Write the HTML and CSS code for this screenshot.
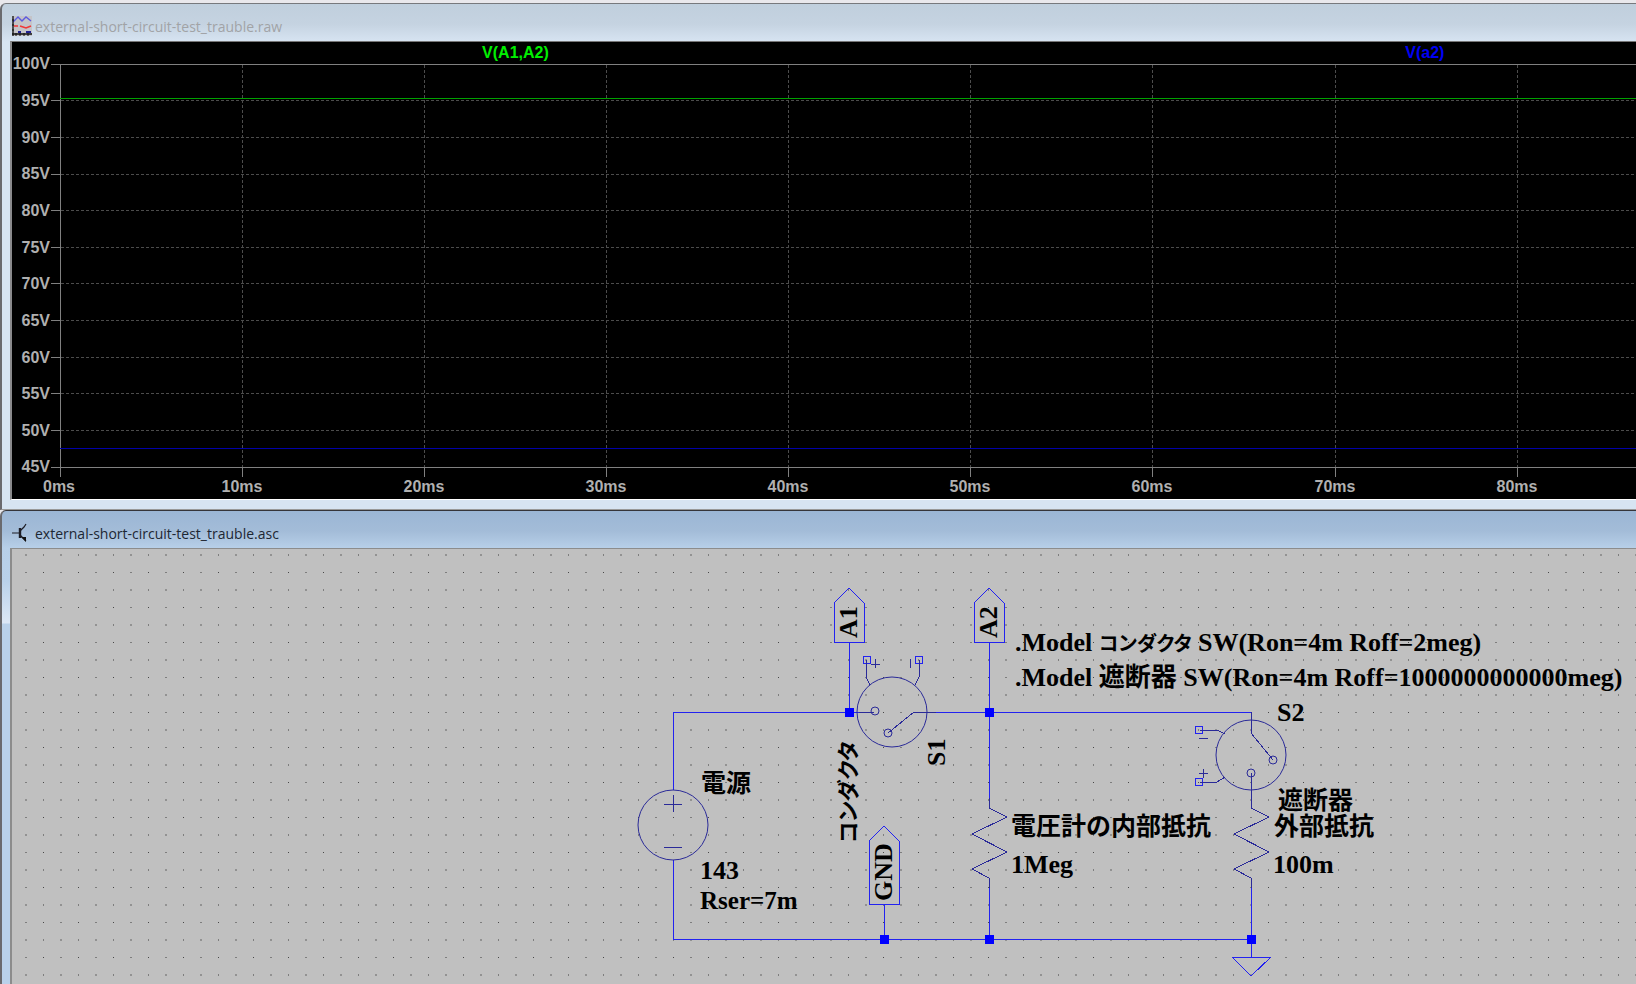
FILE: index.html
```html
<!DOCTYPE html>
<html lang="ja">
<head>
<meta charset="utf-8">
<title>external-short-circuit-test_trauble</title>
<link rel="stylesheet" href="styles.css">
</head>
<body>
<main class="workspace">
  <section class="window window-plot">
    <header class="titlebar">
      <svg class="icon" width="20" height="20" aria-hidden="true">
        <rect width="20" height="20" fill="#c4c4c8"/>
        <path d="M1 6L6 1L10 5L14 1L19 5" fill="none" stroke="#5a5ae0" stroke-width="1.4"/>
        <path d="M2 10H6M8 10L14 12L19 10" fill="none" stroke="#f03838" stroke-width="1.6"/>
        <path d="M6 16H9M14 16H19" stroke="#202090" stroke-width="2"/>
        <path d="M1 0V20M0 18H20" stroke="#111" stroke-width="1.3"/>
        <path d="M4 17V20M8 17V20M12 17V20M16 17V20M0 4H2M0 9H2M0 14H2" stroke="#111"/>
      </svg>
      <h1 class="title title-inactive">external-short-circuit-test_trauble.raw</h1>
    </header>
    <svg class="plot" role="img" aria-label="V(A1,A2), V(a2)">
      <g class="trace-names">
        <text class="name-a" x="31%" y="16">V(A1,A2)</text>
        <text class="name-b" x="87%" y="16">V(a2)</text>
      </g>
      <g class="volts">
        <text x="38" y="27">100V</text>
        <text x="38" y="64">95V</text>
        <text x="38" y="101">90V</text>
        <text x="38" y="137">85V</text>
        <text x="38" y="174">80V</text>
        <text x="38" y="211">75V</text>
        <text x="38" y="247">70V</text>
        <text x="38" y="284">65V</text>
        <text x="38" y="321">60V</text>
        <text x="38" y="357">55V</text>
        <text x="38" y="394">50V</text>
        <text x="38" y="430">45V</text>
      </g>
      <g class="times">
        <text x="47" y="450">0ms</text>
        <text x="230" y="450">10ms</text>
        <text x="412" y="450">20ms</text>
        <text x="594" y="450">30ms</text>
        <text x="776" y="450">40ms</text>
        <text x="958" y="450">50ms</text>
        <text x="1140" y="450">60ms</text>
        <text x="1323" y="450">70ms</text>
        <text x="1505" y="450">80ms</text>
      </g>
      <g class="grid">
        <path d="M230 23V425M412 23V425M594 23V425M776 23V425M958 23V425M1140 23V425M1323 23V425M1505 23V425"/>
        <line x1="49" y1="58" x2="100%" y2="58"/>
        <line x1="49" y1="95" x2="100%" y2="95"/>
        <line x1="49" y1="132" x2="100%" y2="132"/>
        <line x1="49" y1="168" x2="100%" y2="168"/>
        <line x1="49" y1="205" x2="100%" y2="205"/>
        <line x1="49" y1="241" x2="100%" y2="241"/>
        <line x1="49" y1="278" x2="100%" y2="278"/>
        <line x1="49" y1="315" x2="100%" y2="315"/>
        <line x1="49" y1="351" x2="100%" y2="351"/>
        <line x1="49" y1="388" x2="100%" y2="388"/>
      </g>
      <g class="axis">
        <line x1="39" y1="22" x2="100%" y2="22"/>
        <line x1="39" y1="425" x2="100%" y2="425"/>
        <path d="M48 22V435M230 425V435M412 425V435M594 425V435M776 425V435M958 425V435M1140 425V435M1323 425V435M1505 425V435"/>
        <path d="M39 58H48M39 95H48M39 132H48M39 168H48M39 205H48M39 241H48M39 278H48M39 315H48M39 351H48M39 388H48"/>
      </g>
      <line class="trace-a" x1="48" y1="56" x2="100%" y2="56"/>
      <line class="trace-b" x1="48" y1="406" x2="100%" y2="406"/>
    </svg>
  </section>

  <section class="window window-schematic">
    <header class="titlebar">
      <svg class="icon" width="20" height="20" aria-hidden="true">
        <path d="M0 10H7M8 8L12 4L14 1M8 12L14 18" fill="none" stroke="#1c1c24" stroke-width="1.2"/>
        <path d="M8 5V15" stroke="#1c1c24" stroke-width="2.4"/>
        <path d="M9 14L14 14L14 19Z" fill="#111"/>
      </svg>
      <h2 class="title">external-short-circuit-test_trauble.asc</h2>
    </header>
    <svg class="schematic" role="img" aria-label="external-short-circuit-test_trauble">
      <defs>
        <pattern id="dots" x="13" y="5" width="35" height="35" patternUnits="userSpaceOnUse">
          <path d="M0 0h2v2h-2z" fill="#929292"/>
          <path d="M18 0h1v2h-1zM0 18h2v1h-2z" fill="#7e7e7e"/>
          <path d="M18 18h1v1h-1z" fill="#484848"/>
        </pattern>
      </defs>
      <rect width="100%" height="100%" fill="url(#dots)"/>
      <g transform="translate(-12 -549)">
        <g class="wire">
          <path d="M673 790V712H859M849 712V642M927 712H1251V720M989 642V800M989 886V939M673 860V939H1251M884 939V904M1251 886V957"/>
          <path d="M834 642V603L849 588L864 603V642ZM974 642V603L989 588L1004 603V642ZM869 904V841L884 826L899 841V904Z"/>
          <path d="M1232 957H1271L1251 976Z"/>
          <path d="M863 656h7v7h-7zM915 656h7v7h-7zM1195 726h7v7h-7zM1195 778h7v7h-7z"/>
        </g>
        <g class="symbol">
          <circle cx="673" cy="825" r="35"/>
          <path d="M664 804H682M673 795V812M664 847H682"/>
          <circle cx="892" cy="712" r="35"/>
          <circle cx="875" cy="711" r="4"/>
          <circle cx="888" cy="733" r="4"/>
          <path d="M859 712H874M888 733L914 712H936M866 660V677L870 685M919 660V677L915 685M871 664H880M875 659V668M910 659V668"/>
          <circle cx="1251" cy="755" r="35"/>
          <circle cx="1273" cy="760" r="4"/>
          <circle cx="1251" cy="773" r="4"/>
          <path d="M1251 712V733L1273 760M1251 773V808L1269 817L1234 834L1269 852L1234 869L1251 878V888M1200 730H1217L1225 734M1200 782H1217L1225 777M1199 738H1208M1199 773H1208M1203 769V778"/>
          <path d="M989 798V808L1007 817L972 834L1007 852L972 869L989 878V888"/>
        </g>
        <path class="junction" d="M845 708h9v9h-9zM985 708h9v9h-9zM880 935h9v9h-9zM985 935h9v9h-9zM1247 935h9v9h-9z"/>
        <g class="label">
          <text class="large" x="1015" y="651">.Model<tspan class="kana" x="1099">コンダクタ</tspan><tspan x="1198">SW(Ron=4m Roff=2meg)</tspan></text>
          <text class="large" x="1015" y="686">.Model 遮断器 SW(Ron=4m Roff=1000000000000meg)</text>
          <text class="large" x="1277" y="721">S2</text>
          <text x="1278" y="809">遮断器</text>
          <text x="1274" y="835">外部抵抗</text>
          <text class="large" x="1273" y="873">100m</text>
          <text x="1011" y="835">電圧計の内部抵抗</text>
          <text class="large" x="1011" y="873">1Meg</text>
          <text x="701" y="792">電源</text>
          <text class="large" x="700" y="879">143</text>
          <text x="700" y="909">Rser=7m</text>
          <text class="large" transform="translate(857 638) rotate(-90)">A1</text>
          <text class="large" transform="translate(997 638) rotate(-90)">A2</text>
          <text class="large" transform="translate(945 766) rotate(-90)">S1</text>
          <text class="large" transform="translate(892 901) rotate(-90)">GND</text>
          <text class="kana kana-name" transform="translate(856 843) rotate(-90)">コンダクタ</text>
        </g>
      </g>
    </svg>
  </section>
</main>
</body>
</html>
```

FILE: styles.css
```css
* {
  box-sizing: border-box;
}

body {
  margin: 0;
  background: #e9e8ec;
}

.workspace {
  display: flex;
  flex-direction: column;
  min-height: 100vh;
  padding-top: 3px;
  overflow: hidden;
}

.window {
  display: flex;
  flex-direction: column;
  border-left: 2px solid #6a6a6e;
  border-top: 1px solid #77797d;
  border-top-left-radius: 6px;
  padding-left: 8px;
}

.window-plot {
  background: linear-gradient(#c0cfdd 0, #c5d3e1 20px, #d7e4f2 38px);
  padding-bottom: 9px;
  border-bottom: 1px solid #999;
}

.window-schematic {
  flex: 1;
  border-top: 1px solid #35353a;
  background:
    linear-gradient(#9bb6d5 0, #a3bcd8 20px, #b7cfe8 37px, #b9d1ea 70px, #dce8f6 112px, #b9d1ea 113px);
}

.titlebar {
  display: flex;
  align-items: center;
  gap: 3px;
  height: 37px;
  padding: 7px 0 0 2px;
}

.icon {
  flex: none;
}

.title {
  margin: 0;
  padding-top: 1px;
  font: 400 14px/20px "Open Sans", "Noto Sans", sans-serif;
  color: #1d2733;
}

.title-inactive {
  color: #a1a3a6;
}

.plot {
  display: block;
  width: 100%;
  height: 459px;
  background: #000;
  border-left: 2px solid #8a8a8c;
  border-top: 1px solid #777;
  border-bottom: 1px solid #fff;
  font: bold 16px "Liberation Sans", Arial, sans-serif;
  fill: #b0b0b0;
}

.trace-names,
.times {
  text-anchor: middle;
}

.volts {
  text-anchor: end;
}

.name-a {
  fill: #00f000;
}

.name-b {
  fill: #0000f5;
}

.grid,
.axis,
.trace-a,
.trace-b {
  fill: none;
  stroke-width: 1px;
  shape-rendering: crispEdges;
}

.grid {
  stroke: #4c4c4c;
  stroke-dasharray: 3 2;
}

.axis {
  stroke: #808080;
}

.trace-a {
  stroke: #00a000;
}

.trace-b {
  stroke: #0000a8;
}

.schematic {
  display: block;
  flex: 1;
  width: 100%;
  min-height: 436px;
  background: #c0c0c0;
  border-left: 2px solid #8c8c8c;
  border-top: 1px solid #8c8c8c;
}

.wire,
.symbol {
  fill: none;
  stroke-width: 1px;
}

.wire {
  stroke: #2222f0;
  shape-rendering: crispEdges;
}

.symbol {
  stroke: #2a2a98;
}

.symbol path {
  shape-rendering: crispEdges;
}

.junction {
  fill: #0000ff;
}

.label {
  font: bold 25px "Liberation Serif", "Times New Roman", "Noto Sans CJK JP", serif;
  fill: #000;
}

.large {
  font-size: 26px;
}

.kana {
  font-size: 20px;
  font-feature-settings: "palt";
}

.kana-name {
  font-size: 22px;
}
```
